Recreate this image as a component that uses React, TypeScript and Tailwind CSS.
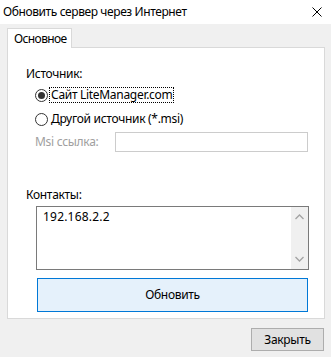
import React, { useState } from "react";

const font = { fontFamily: '"Noto Sans", "Liberation Sans", sans-serif' };

function Radio({ checked }: { checked: boolean }) {
  return (
    <span className="w-[13px] h-[13px] rounded-full border border-[#333333] bg-white flex items-center justify-center shrink-0">
      {checked && <span className="w-[7px] h-[7px] rounded-full bg-[#333333]" />}
    </span>
  );
}

export default function App() {
  const [source, setSource] = useState<"site" | "msi">("site");
  const [contacts, setContacts] = useState("192.168.2.2");

  return (
    <div className="w-[331px] h-[357px] bg-[#f0f0f0] flex flex-col text-[12px] tracking-[-0.3px] text-black overflow-hidden whitespace-nowrap" style={font}>
      {/* title bar */}
      <div className="h-[24px] bg-white flex items-center justify-between pl-[3px] pr-[9px] shrink-0">
        <span className="leading-[16px] tracking-[-0.4px]">Обновить сервер через Интернет</span>
        <svg width="10" height="10" viewBox="0 0 10 10" className="mt-[-1px]">
          <path d="M0.5 0.5 L9.5 9.5 M9.5 0.5 L0.5 9.5" stroke="#000" strokeWidth="1" />
        </svg>
      </div>

      {/* tabs */}
      <div className="flex pl-[7px] mt-[4px] shrink-0">
        <div className="w-[65px] h-[20px] bg-white border border-b-0 border-[#d9d9d9] flex items-center pl-[6px] mb-[-1px] relative z-10 tracking-[-0.6px]">
          Основное
        </div>
      </div>

      {/* panel */}
      <div className="ml-[7px] w-[318px] h-[272px] bg-white border border-[#d9d9d9] flex flex-col pl-[18px] shrink-0">
        <div className="h-[16px] mt-[18px] flex items-center">Источник:</div>

        <label className="h-[16px] mt-[5px] ml-[9px] flex items-center gap-[1px]" onClick={() => setSource("site")}>
          <Radio checked={source === "site"} />
          <span className="border border-dotted border-black h-[16px] flex items-center px-[1px] leading-none">
            Сайт LiteManager.com
          </span>
        </label>

        <label className="h-[16px] mt-[8px] ml-[9px] flex items-center gap-[3px]" onClick={() => setSource("msi")}>
          <Radio checked={source === "msi"} />
          <span>Другой источник (*.msi)</span>
        </label>

        <div className="h-[20px] mt-[5px] ml-[9px] flex items-center">
          <span className="w-[80px] text-[#a0a0a0]">Msi ссылка:</span>
          <div className="w-[193px] h-[20px] border border-[#cccccc] bg-white" />
        </div>

        <div className="h-[16px] mt-[35px] flex items-center">Контакты:</div>

        <div className="mt-[3px] ml-[10px] w-[273px] h-[64px] border border-[#7a7a7a] flex">
          <textarea
            value={contacts}
            onChange={(e) => setContacts(e.target.value)}
            className="flex-1 resize-none outline-none pl-[6px] pt-[2px] leading-[16px] text-[12px] tracking-[0.2px]"
            style={font}
          />
          <div className="w-[17px] bg-[#f0f0f0] flex flex-col items-center justify-between py-[7px]">
            <svg width="9" height="6" viewBox="0 0 9 6">
              <path d="M0.5 5 L4.5 1 L8.5 5" stroke="#a3a3a3" strokeWidth="1.3" fill="none" />
            </svg>
            <svg width="9" height="6" viewBox="0 0 9 6">
              <path d="M0.5 1 L4.5 5 L8.5 1" stroke="#a3a3a3" strokeWidth="1.3" fill="none" />
            </svg>
          </div>
        </div>

        <button className="mt-[8px] ml-[11px] w-[271px] h-[34px] border border-[#0078d7] bg-[#e5f1fb] flex items-center justify-center">
          Обновить
        </button>
      </div>

      {/* footer */}
      <div className="flex justify-end pr-[7px] mt-[9px]">
        <button className="w-[73px] h-[23px] border border-[#adadad] bg-[#e1e1e1] flex items-center justify-center">
          Закрыть
        </button>
      </div>
    </div>
  );
}
